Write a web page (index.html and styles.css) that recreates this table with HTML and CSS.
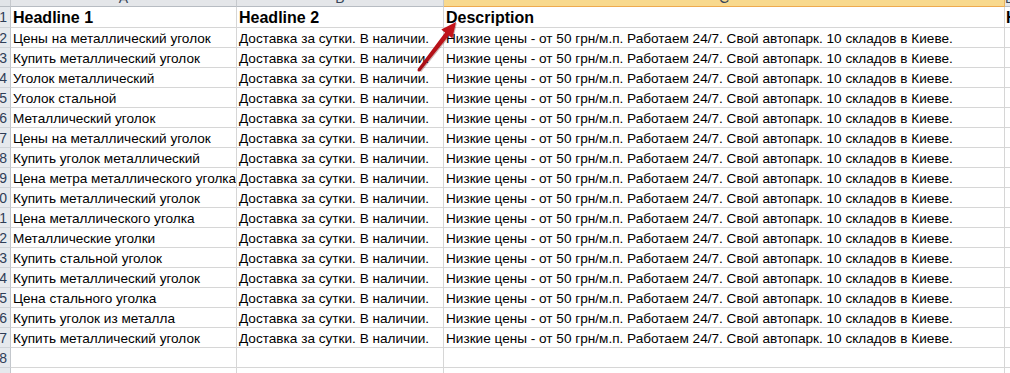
FILE: index.html
```html
<!DOCTYPE html>
<html lang="ru">
<head>
<meta charset="utf-8">
<title>Sheet</title>
<link rel="stylesheet" href="styles.css">
</head>
<body>
<div class="wrap">
<div class="sheet">
  <div class="ch corner"></div>
  <div class="ch"><span class="letter">A</span></div>
  <div class="ch"><span class="letter">B</span></div>
  <div class="ch sel"><span class="letter">C</span></div>
  <div class="ch last"><span class="letter">D</span></div>

  <div class="rh"><span>1</span></div>
  <div class="c hd">Headline 1</div>
  <div class="c hd">Headline 2</div>
  <div class="c hd">Description</div>
  <div class="c hd d">Headline</div>

  <div class="rh"><span>2</span></div>
  <div class="c">Цены на металлический уголок</div>
  <div class="c">Доставка за сутки. В наличии.</div>
  <div class="c">Низкие цены - от 50 грн/м.п. Работаем 24/7. Свой автопарк. 10 складов в Киеве.</div>
  <div class="c d"></div>

  <div class="rh"><span>3</span></div>
  <div class="c">Купить металлический уголок</div>
  <div class="c">Доставка за сутки. В наличии.</div>
  <div class="c">Низкие цены - от 50 грн/м.п. Работаем 24/7. Свой автопарк. 10 складов в Киеве.</div>
  <div class="c d"></div>

  <div class="rh"><span>4</span></div>
  <div class="c">Уголок металлический</div>
  <div class="c">Доставка за сутки. В наличии.</div>
  <div class="c">Низкие цены - от 50 грн/м.п. Работаем 24/7. Свой автопарк. 10 складов в Киеве.</div>
  <div class="c d"></div>

  <div class="rh"><span>5</span></div>
  <div class="c">Уголок стальной</div>
  <div class="c">Доставка за сутки. В наличии.</div>
  <div class="c">Низкие цены - от 50 грн/м.п. Работаем 24/7. Свой автопарк. 10 складов в Киеве.</div>
  <div class="c d"></div>

  <div class="rh"><span>6</span></div>
  <div class="c">Металлический уголок</div>
  <div class="c">Доставка за сутки. В наличии.</div>
  <div class="c">Низкие цены - от 50 грн/м.п. Работаем 24/7. Свой автопарк. 10 складов в Киеве.</div>
  <div class="c d"></div>

  <div class="rh"><span>7</span></div>
  <div class="c">Цены на металлический уголок</div>
  <div class="c">Доставка за сутки. В наличии.</div>
  <div class="c">Низкие цены - от 50 грн/м.п. Работаем 24/7. Свой автопарк. 10 складов в Киеве.</div>
  <div class="c d"></div>

  <div class="rh"><span>8</span></div>
  <div class="c">Купить уголок металлический</div>
  <div class="c">Доставка за сутки. В наличии.</div>
  <div class="c">Низкие цены - от 50 грн/м.п. Работаем 24/7. Свой автопарк. 10 складов в Киеве.</div>
  <div class="c d"></div>

  <div class="rh"><span>9</span></div>
  <div class="c">Цена метра металлического уголка</div>
  <div class="c">Доставка за сутки. В наличии.</div>
  <div class="c">Низкие цены - от 50 грн/м.п. Работаем 24/7. Свой автопарк. 10 складов в Киеве.</div>
  <div class="c d"></div>

  <div class="rh"><span>10</span></div>
  <div class="c">Купить металлический уголок</div>
  <div class="c">Доставка за сутки. В наличии.</div>
  <div class="c">Низкие цены - от 50 грн/м.п. Работаем 24/7. Свой автопарк. 10 складов в Киеве.</div>
  <div class="c d"></div>

  <div class="rh"><span>11</span></div>
  <div class="c">Цена металлического уголка</div>
  <div class="c">Доставка за сутки. В наличии.</div>
  <div class="c">Низкие цены - от 50 грн/м.п. Работаем 24/7. Свой автопарк. 10 складов в Киеве.</div>
  <div class="c d"></div>

  <div class="rh"><span>12</span></div>
  <div class="c">Металлические уголки</div>
  <div class="c">Доставка за сутки. В наличии.</div>
  <div class="c">Низкие цены - от 50 грн/м.п. Работаем 24/7. Свой автопарк. 10 складов в Киеве.</div>
  <div class="c d"></div>

  <div class="rh"><span>13</span></div>
  <div class="c">Купить стальной уголок</div>
  <div class="c">Доставка за сутки. В наличии.</div>
  <div class="c">Низкие цены - от 50 грн/м.п. Работаем 24/7. Свой автопарк. 10 складов в Киеве.</div>
  <div class="c d"></div>

  <div class="rh"><span>14</span></div>
  <div class="c">Купить металлический уголок</div>
  <div class="c">Доставка за сутки. В наличии.</div>
  <div class="c">Низкие цены - от 50 грн/м.п. Работаем 24/7. Свой автопарк. 10 складов в Киеве.</div>
  <div class="c d"></div>

  <div class="rh"><span>15</span></div>
  <div class="c">Цена стального уголка</div>
  <div class="c">Доставка за сутки. В наличии.</div>
  <div class="c">Низкие цены - от 50 грн/м.п. Работаем 24/7. Свой автопарк. 10 складов в Киеве.</div>
  <div class="c d"></div>

  <div class="rh"><span>16</span></div>
  <div class="c">Купить уголок из металла</div>
  <div class="c">Доставка за сутки. В наличии.</div>
  <div class="c">Низкие цены - от 50 грн/м.п. Работаем 24/7. Свой автопарк. 10 складов в Киеве.</div>
  <div class="c d"></div>

  <div class="rh"><span>17</span></div>
  <div class="c">Купить металлический уголок</div>
  <div class="c">Доставка за сутки. В наличии.</div>
  <div class="c">Низкие цены - от 50 грн/м.п. Работаем 24/7. Свой автопарк. 10 складов в Киеве.</div>
  <div class="c d"></div>

  <div class="rh"><span>18</span></div>
  <div class="c"></div>
  <div class="c"></div>
  <div class="c"></div>
  <div class="c d"></div>

  <div class="rh"><span>19</span></div>
  <div class="c"></div>
  <div class="c"></div>
  <div class="c"></div>
  <div class="c d"></div>
</div>

<svg class="arrow" width="60" height="65" viewBox="0 0 60 65" aria-hidden="true">
  <defs>
    <linearGradient id="ag" x1="0" y1="1" x2="1" y2="0">
      <stop offset="0" stop-color="#a60f16"/>
      <stop offset="1" stop-color="#c8141b"/>
    </linearGradient>
  </defs>
  <polygon points="7.7,54.0 35.1,17.54 31.3,14.6 46,7 42.38,23.16 38.9,20.4 10.3,56.0" fill="#5a0608" opacity="0.3" transform="translate(0.9,0.9)"/>
  <polygon points="7.7,54.0 35.1,17.54 31.3,14.6 46,7 42.38,23.16 38.9,20.4 10.3,56.0" fill="url(#ag)"/>
  <circle cx="9" cy="55" r="1.5" fill="#a60f16"/>
</svg>
</div>
</body>
</html>
```

FILE: styles.css
```css
html, body {
  margin: 0;
  padding: 0;
  background: #ffffff;
}

body {
  width: 1010px;
  height: 373px;
  overflow: hidden;
}

.wrap {
  position: relative;
  width: 1010px;
  height: 373px;
  overflow: hidden;
}

.sheet {
  display: grid;
  grid-template-columns: 11px 226px 207px 561px 1fr;
  grid-template-rows: 7px 21px repeat(17, 20px) 20px;
  font-family: "Liberation Sans", Arial, sans-serif;
  font-size: 13.6px;
  color: #000000;
}

.sheet > div {
  box-sizing: border-box;
  overflow: hidden;
  white-space: nowrap;
}

/* column header strip */
.ch {
  background: #e4e6e9;
  border-right: 1px solid #c6c9cd;
  border-bottom: 1px solid #b7bcc2;
  text-align: center;
}

.ch.corner {
  background: #e1e4e8;
}

.ch.sel {
  background: #f8d98e;
  border-bottom: 1px solid #eeaa4f;
  border-right: 1px solid #e8b45e;
}

.ch.last {
  border-right: none;
}

.letter {
  display: block;
  font-size: 14px;
  line-height: 14px;
  margin-top: -9px;
  color: #39465a;
}

/* row headers */
.rh {
  background: #e6e9ed;
  border-right: 1px solid #c3c7cc;
  border-bottom: 1px solid #cfd3d8;
  display: flex;
  justify-content: flex-end;
  padding-right: 3px;
  font-size: 14px;
  line-height: 20px;
  color: #2e3d57;
}

.rh span {
  flex: none;
}

/* cells */
.c {
  border-right: 1px solid #d6d6d6;
  border-bottom: 1px solid #d6d6d6;
  padding-left: 2px;
  padding-top: 1px;
  line-height: 19px;
}

.c.d {
  border-right: none;
  padding-left: 1px;
}

.c.hd {
  font-weight: bold;
  font-size: 16px;
  line-height: 20px;
  padding-top: 1px;
}

.arrow {
  position: absolute;
  left: 410px;
  top: 15px;
  pointer-events: none;
}
```
